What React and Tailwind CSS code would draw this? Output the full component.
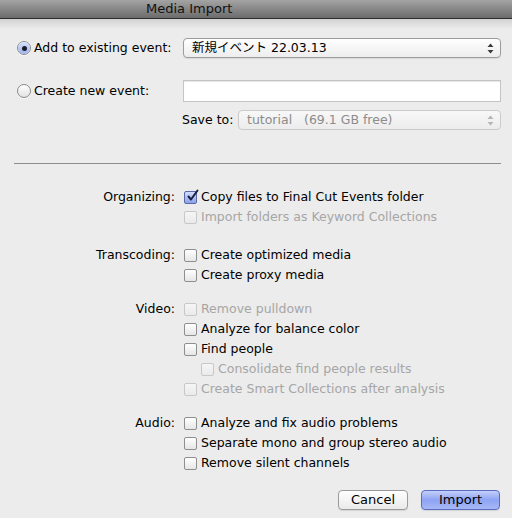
import React from "react";

const font = { fontFamily: '"DejaVu Sans", "Noto Sans CJK JP", sans-serif' };

function Radio({ checked }) {
  return (
    <span className="relative flex h-[14px] w-[14px] shrink-0 items-center justify-center rounded-full border border-[#8a8a8a] bg-gradient-to-b from-[#ffffff] to-[#e2e2e2] shadow-[0_1px_0_rgba(255,255,255,0.6)]">
      {checked && (
        <span className="absolute inset-0 rounded-full bg-gradient-to-b from-[#d6e0fb] to-[#9fb3ee]" />
      )}
      {checked && <span className="relative h-[5px] w-[5px] rounded-full bg-[#1a1a2a]" />}
    </span>
  );
}

function Check({ checked, disabled }) {
  if (checked) {
    return (
      <span className="relative flex h-[13px] w-[13px] shrink-0 items-center justify-center rounded-[2px] border border-[#5a6aa8] bg-gradient-to-b from-[#d3ddfb] to-[#8aa2ea]">
        <svg width="13" height="13" viewBox="0 0 13 13" className="absolute left-[1px] top-[-3px]">
          <path d="M2.5 7.5 L5 10.5 L11.5 1.5" fill="none" stroke="#1b2040" strokeWidth="2" strokeLinecap="round" strokeLinejoin="round" />
        </svg>
      </span>
    );
  }
  return (
    <span
      className={
        "h-[13px] w-[13px] shrink-0 rounded-[2px] border bg-gradient-to-b " +
        (disabled
          ? "border-[#c8c8c8] from-[#f6f6f6] to-[#eaeaea]"
          : "border-[#8e8e8e] from-[#ffffff] to-[#e6e6e6]")
      }
    />
  );
}

function Item({ label, checked, disabled, indent }) {
  return (
    <div className={"flex h-[20px] items-center gap-[4px] " + (indent ? "pl-[17px]" : "")}>
      <Check checked={checked} disabled={disabled} />
      <span className={disabled ? "text-[#a6a6a6]" : "text-[#000]"}>{label}</span>
    </div>
  );
}

function Group({ label, children, mt }) {
  return (
    <div className={"flex " + mt}>
      <div className="h-[20px] w-[176px] pr-[1px] text-right leading-[20px]">{label}</div>
      <div className="flex flex-col pl-[8px]">{children}</div>
    </div>
  );
}

function Arrows({ disabled }) {
  const c = disabled ? "#b5b5b5" : "#3a3a3a";
  return (
    <svg width="7" height="11" viewBox="0 0 7 11">
      <path d="M3.5 0.5 L6.5 4 L0.5 4 Z" fill={c} />
      <path d="M3.5 10.5 L6.5 7 L0.5 7 Z" fill={c} />
    </svg>
  );
}

export default function App() {
  return (
    <div className="h-[518px] w-[512px] overflow-hidden bg-[#ececec] text-[12.5px] text-black" style={font}>
      <div className="h-[19px] border-b border-[#2e2e2e] bg-gradient-to-b from-[#a4a4a4] to-[#6c6c6c] pl-[146px] text-[13px] leading-[18px] text-[#111]">
        Media Import
      </div>
      <div className="h-[10px] bg-gradient-to-b from-[#d2d2d2] to-[#ececec]" />

      <div className="flex h-[20px] items-center pt-0 mt-[9px]">
        <div className="flex w-[183px] items-center gap-[3px] pl-[17px]">
          <Radio checked />
          <span>Add to existing event:</span>
        </div>
        <div className="flex h-[20px] w-[318px] items-center justify-between rounded-[4px] border border-[#9c9c9c] bg-gradient-to-b from-[#ffffff] to-[#ededed] pl-[8px] pr-[6px] shadow-[0_1px_1px_rgba(0,0,0,0.08)]">
          <span>新規イベント 22.03.13</span>
          <Arrows />
        </div>
      </div>

      <div className="mt-[22px] flex h-[22px] items-center">
        <div className="flex w-[183px] items-center gap-[3px] pl-[17px]">
          <Radio />
          <span>Create new event:</span>
        </div>
        <div className="h-[22px] w-[318px] border border-[#c4c4c4] bg-white shadow-[inset_0_1px_1px_rgba(0,0,0,0.1)]" />
      </div>

      <div className="mt-[8px] flex h-[20px] items-center">
        <div className="w-[238px] pl-[182px]">Save to:</div>
        <div className="flex h-[20px] w-[263px] items-center justify-between rounded-[4px] border border-[#cbcbcb] bg-gradient-to-b from-[#f8f8f8] to-[#ececec] pl-[8px] pr-[6px] text-[#8c8c8c]">
          <span className="whitespace-pre">tutorial   (69.1 GB free)</span>
          <Arrows disabled />
        </div>
      </div>

      <div className="ml-[14px] mt-[33px] h-[1px] w-[487px] bg-[#8e8e8e]" />

      <div className="mt-[23px] flex flex-col">
        <Group label="Organizing:" mt="">
          <Item label="Copy files to Final Cut Events folder" checked />
          <Item label="Import folders as Keyword Collections" disabled />
        </Group>
        <Group label="Transcoding:" mt="mt-[18px]">
          <Item label="Create optimized media" />
          <Item label="Create proxy media" />
        </Group>
        <Group label="Video:" mt="mt-[14px]">
          <Item label="Remove pulldown" disabled />
          <Item label="Analyze for balance color" />
          <Item label="Find people" />
          <Item label="Consolidate find people results" disabled indent />
          <Item label="Create Smart Collections after analysis" disabled />
        </Group>
        <Group label="Audio:" mt="mt-[14px]">
          <Item label="Analyze and fix audio problems" />
          <Item label="Separate mono and group stereo audio" />
          <Item label="Remove silent channels" />
        </Group>
      </div>

      <div className="mt-[17px] flex justify-end gap-[13px] pr-[12px]">
        <button className="h-[20px] w-[70px] rounded-[4px] border border-[#9a9a9a] bg-gradient-to-b from-[#ffffff] to-[#e9e9e9] text-[13px] leading-[18px] shadow-[0_1px_1px_rgba(0,0,0,0.1)]">
          Cancel
        </button>
        <button className="h-[20px] w-[79px] rounded-[4px] border border-[#5a6cc0] bg-gradient-to-b from-[#c4cffa] via-[#8ea3f3] to-[#a6b8f8] text-[13px] leading-[18px] shadow-[0_1px_1px_rgba(0,0,0,0.1)]">
          Import
        </button>
      </div>
    </div>
  );
}
